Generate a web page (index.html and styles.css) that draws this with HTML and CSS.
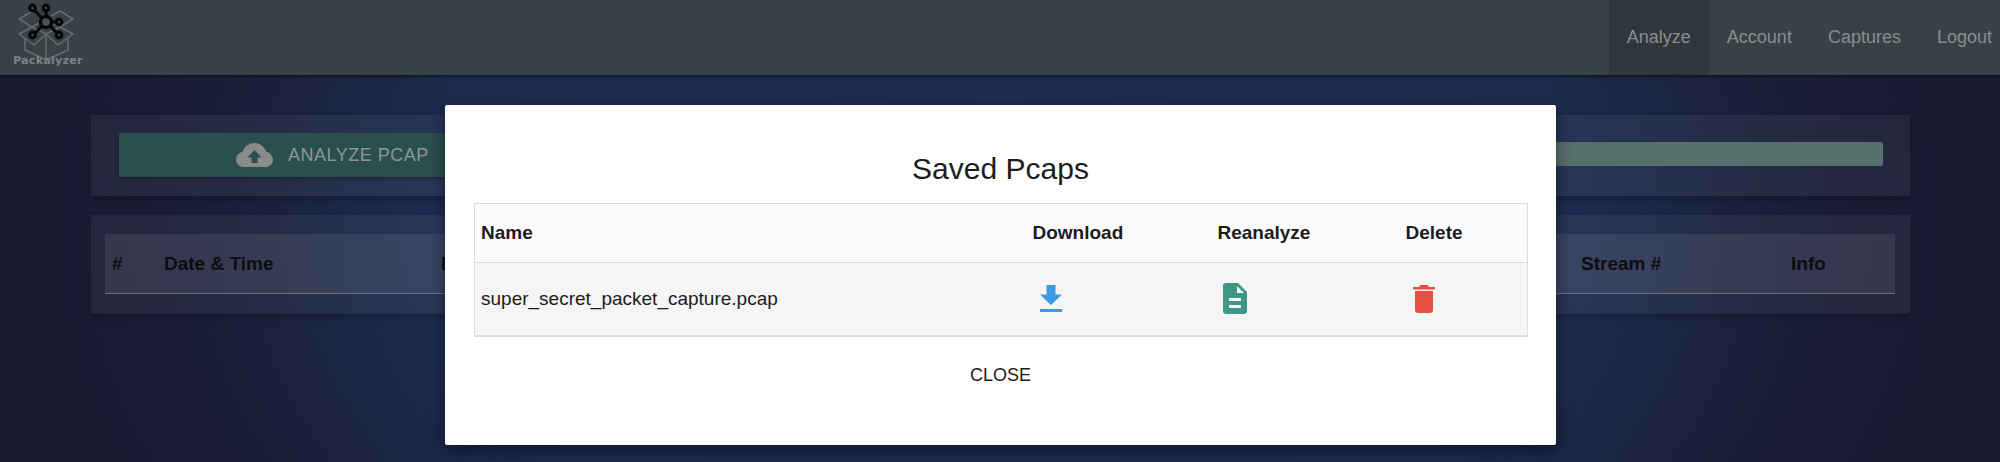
FILE: index.html
```html
<!DOCTYPE html>
<html lang="en">
<head>
<meta charset="utf-8">
<title>Packalyzer</title>
<link rel="stylesheet" href="styles.css">
</head>
<body>
<header class="navbar">
  <a class="logo">
    <svg class="logo-art" width="92" height="60" viewBox="0 0 92 60" fill="none">
      <g stroke="#666d70" stroke-width="1.5" stroke-linejoin="round">
        <path d="M46 19 L33 11 L19 19 L32 27 Z"/>
        <path d="M46 19 L60 11 L73 19 L60 27 Z"/>
        <path d="M32 27 L19 34 L34 45 L46 34 Z"/>
        <path d="M60 27 L73 34 L58 45 L46 34 Z"/>
        <path d="M25 38 V50 L46 60 L68 50 V38"/>
        <path d="M46 34 V60"/>
      </g>
      <g stroke="#060607" stroke-width="3">
        <path d="M33 9 L46 22 M46 8 V22 M59 22 H46 M33 35 L46 22 M59 35 L46 22"/>
        <circle cx="46" cy="22" r="5.500" stroke-width="3.400" fill="#4c5356"/>
        <g stroke-width="3.200" fill="#4c5356">
          <circle cx="32.500" cy="8" r="2.800"/>
          <circle cx="46" cy="8" r="2.800"/>
          <circle cx="59" cy="22" r="2.800"/>
          <circle cx="32.500" cy="35" r="2.800"/>
          <circle cx="59" cy="35" r="2.800"/>
        </g>
      </g>
    </svg>
    <span class="logo-text">Packalyzer</span>
  </a>
  <nav class="nav-links">
    <a class="nav-link active">Analyze</a>
    <a class="nav-link">Account</a>
    <a class="nav-link">Captures</a>
    <a class="nav-link">Logout</a>
  </nav>
</header>

<main class="content">
  <section class="panel upload-panel">
    <button class="analyze-btn">
      <svg class="cloud" width="37" height="24" viewBox="0 0 37 24">
        <path fill="#8a8a8a" d="M8 24 C3.500 24 0 20.700 0 16.500 C0 12.800 2.700 9.700 6.400 9.100 C8 3.700 12.800 0 18.300 0 C23.600 0 28.300 3.400 30 8.400 C34 9.300 37 12.800 37 16.700 C37 20.800 33.700 24 29.500 24 Z"/>
        <path fill="#2a4f4c" d="M18.500 7 L25.500 14.500 H21.500 V20 H15.500 V14.500 H11.500 Z"/>
      </svg>
      <span>ANALYZE PCAP</span>
    </button>
    <div class="progress"></div>
  </section>

  <section class="panel packets-panel">
    <div class="packets-head">
      <span>#</span>
      <span>Date &amp; Time</span>
      <span>IP Source</span>
      <span>Stream #</span>
      <span>Info</span>
    </div>
  </section>
</main>

<div class="modal">
  <h1 class="modal-title">Saved Pcaps</h1>
  <table class="pcaps">
    <colgroup>
      <col class="col-name"><col class="col-dl"><col class="col-re"><col class="col-del">
    </colgroup>
    <thead>
      <tr><th>Name</th><th>Download</th><th>Reanalyze</th><th>Delete</th></tr>
    </thead>
    <tbody>
      <tr>
        <td>super_secret_packet_capture.pcap</td>
        <td>
          <svg class="icon icon-dl" width="22" height="27" viewBox="0 0 22 27">
            <path fill="#3f9ae4" d="M6.500 0 H15.500 V9.500 H22 L11 20 L0 9.500 H6.500 Z"/>
            <rect fill="#3f9ae4" x="0" y="24" width="22" height="3"/>
          </svg>
        </td>
        <td>
          <svg class="icon icon-doc" width="24" height="31" viewBox="0 0 24 31">
            <path fill="#409686" d="M3 0 H15 L24 9 V28 Q24 31 21 31 H3 Q0 31 0 28 V3 Q0 0 3 0 Z"/>
            <path fill="#f2f7f6" d="M14 3 L21 10 H14 Z"/>
            <rect fill="#f5f5f5" x="6" y="15" width="12" height="3"/>
            <rect fill="#f5f5f5" x="6" y="22" width="12" height="3"/>
          </svg>
        </td>
        <td>
          <svg class="icon icon-trash" width="22" height="28" viewBox="0 0 22 28">
            <path fill="#e55244" d="M8 0 H14 Q15.500 0 16 2 H22 V4.500 H0 V2 H6 Q6.500 0 8 0 Z"/>
            <path fill="#e55244" d="M2 6 H20 V25 Q20 28 17 28 H5 Q2 28 2 25 Z"/>
          </svg>
        </td>
      </tr>
    </tbody>
  </table>
  <div class="modal-footer"><button class="close-btn">CLOSE</button></div>
</div>
</body>
</html>
```

FILE: styles.css
```css
* { box-sizing: border-box; }

html, body {
  margin: 0;
  height: 462px;
  overflow: hidden;
}

body {
  position: relative;
  font-family: "Liberation Sans", Arial, sans-serif;
  background: radial-gradient(ellipse 1050px 700px at 50% 50%, #1c2e53 0%, #1c2b4e 55%, #1a1d37 78%, #19192d 100%);
}

.navbar {
  height: 75px;
  display: flex;
  justify-content: space-between;
  background: #374146;
  box-shadow: 0 1px 3px rgba(0, 0, 0, 0.6);
}

.logo {
  position: relative;
  display: block;
  width: 92px;
  height: 75px;
}

.logo-art { display: block; }

.logo-text {
  position: absolute;
  left: 13px;
  top: 53px;
  color: #7b8082;
  font-family: "DejaVu Sans", sans-serif;
  font-weight: 700;
  font-size: 11.2px;
  line-height: 16px;
  letter-spacing: 0.2px;
}

.nav-links {
  display: flex;
  margin-right: -10px;
}

.nav-link {
  padding: 0 18px;
  font-size: 18px;
  line-height: 74px;
  color: #8a8d8f;
}

.nav-link.active { background: #30373c; }

.content { padding: 40px 90px 0 91px; }

.panel {
  background: rgba(255, 255, 255, 0.05);
  box-shadow: 0 3px 6px rgba(0, 0, 0, 0.25);
}

.upload-panel {
  display: flex;
  align-items: flex-start;
  gap: 30px;
  height: 81px;
  padding: 18px 27px 0 28px;
}

.analyze-btn {
  flex: 0 0 680px;
  height: 44px;
  padding: 0 118px 0 117px;
  display: flex;
  align-items: center;
  justify-content: flex-start;
  gap: 15px;
  border: 0;
  border-radius: 2px;
  background: #2a4f4c;
  color: #8c9795;
  font-family: inherit;
  font-size: 18px;
  letter-spacing: 0.5px;
  box-shadow: 0 2px 3px rgba(0, 0, 0, 0.25);
}

.progress {
  flex: 1;
  height: 24px;
  margin-top: 9px;
  border-radius: 2px;
  background: #56706b;
}

.packets-panel {
  height: 99px;
  margin-top: 19px;
  padding: 19px 15px 20px 14px;
}

.packets-head {
  height: 60px;
  display: grid;
  grid-template-columns: 52px 277px 1fr 210px 111px;
  align-items: center;
  border-radius: 2px 2px 0 0;
  border-bottom: 1px solid #6d7079;
  background: rgba(255, 255, 255, 0.075);
  color: #0d0d10;
  font-size: 19px;
  font-weight: 700;
}

.packets-head span { padding: 0 7px; }

.modal {
  position: absolute;
  left: 445px;
  top: 105px;
  width: 1111px;
  height: 340px;
  padding: 0 29px 0 29px;
  background: #fff;
  border-radius: 2px;
  box-shadow: 0 6px 16px rgba(0, 0, 0, 0.45);
}

.modal-title {
  margin: 0;
  height: 98px;
  padding-top: 45px;
  text-align: center;
  font-size: 30px;
  font-weight: 400;
  line-height: 38px;
  color: #1c1c1c;
}

.pcaps {
  width: 1053px;
  table-layout: fixed;
  border-collapse: collapse;
  border: 1px solid #dcdcdc;
  color: #1c1c1c;
  font-size: 19px;
}

.col-name { width: 552px; }
.col-dl { width: 185px; }
.col-re { width: 188px; }
.col-del { width: 128px; }

.pcaps th,
.pcaps td {
  padding: 0 6px;
  text-align: left;
}

.pcaps th {
  height: 59px;
  font-size: 19px;
  background: #fbfbfb;
  border-bottom: 1px solid #dcdcdc;
}

.pcaps td {
  height: 73px;
  background: #f5f5f5;
  border-bottom: 2px solid #dcdcdc;
}

.icon { display: block; }
.icon-dl { margin-left: 7px; }
.icon-doc { margin-left: 5px; }
.icon-trash { margin-left: 7px; }

.modal-footer {
  margin-top: 25px;
  text-align: center;
}

.close-btn {
  padding: 0;
  border: 0;
  background: none;
  color: #1c1c1c;
  font-family: inherit;
  font-size: 18px;
  line-height: 26px;
}
```
